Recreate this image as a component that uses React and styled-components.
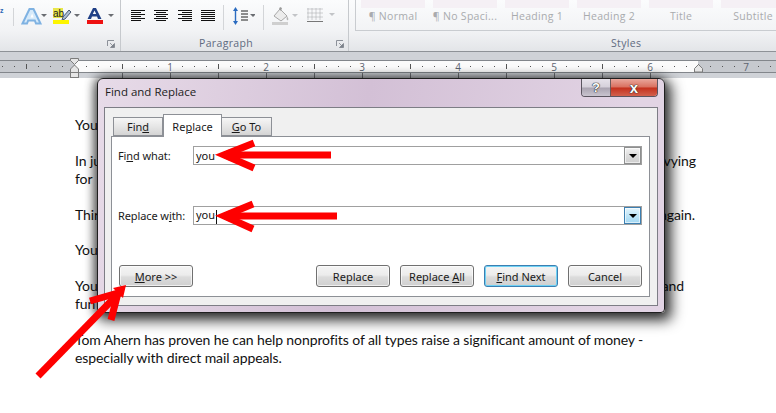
import React from 'react'
import styled, { createGlobalStyle } from 'styled-components'

const GlobalStyle = createGlobalStyle`
  html, body { margin: 0; padding: 0; background: #fff; }
  body { font-family: "Noto Sans", sans-serif; }
`

const Page = styled.div`
  position: relative;
  width: 776px;
  height: 413px;
  overflow: hidden;
  background: #fff;
`

const Ribbon = styled.div`
  display: flex;
  height: 51px;
  background: linear-gradient(#fbfcfd, #f2f3f5 60%, #e3e5e8);
  border-bottom: 1px solid #8e9297;
`

const Group = styled.div`
  width: ${p => p.$w}px;
  flex: none;
  display: flex;
  flex-direction: column;
  box-sizing: border-box;
  border-right: ${p => (p.$last ? 'none' : '1px solid #c6c9cd')};
`

const GroupBody = styled.div`
  height: 35px;
  display: flex;
  align-items: flex-start;
`

const GroupFoot = styled.div`
  display: flex;
  align-items: center;
  justify-content: ${p => p.$align || 'flex-end'};
  height: 15px;
  padding: 0 ${p => p.$pad || 4}px 0 ${p => p.$left || 0}px;
  font: 10.5px "Open Sans", sans-serif;
  letter-spacing: 0.35px;
  color: #5f6a80;
`

const Launcher = styled.svg`
  width: 8px;
  height: 8px;
  flex: none;
  margin-top: 2px;
`

const Gallery = styled.div`
  display: flex;
  gap: 8px;
  margin-left: 6px;
  padding-left: 5px;
  height: 31px;
  width: 440px;
  box-sizing: border-box;
  border-left: 1px solid #c9ccd0;
  border-bottom: 1px solid #c9ccd0;
`

const StyleCard = styled.div`
  flex: none;
  width: 64px;
  display: flex;
  flex-direction: column;
  align-items: center;
`

const StyleSwatch = styled.div`
  width: 100%;
  height: 8px;
  background: #f5f0f5;
`

const StyleName = styled.span`
  margin-top: 1px;
  font: 10.5px "Open Sans", sans-serif;
  letter-spacing: 0.3px;
  white-space: nowrap;
  color: #a9abae;
`

const RulerBand = styled.div`
  height: 26px;
  background: #cfd2d7;
`

const RulerArt = styled.svg`
  display: block;
  width: 776px;
  height: 26px;
`

const Doc = styled.div`
  padding: 38px 0 0 75px;
  font: 14px/17.9px Lato, sans-serif;
  letter-spacing: -0.1px;
  color: #111;
`

const Para = styled.div`
  display: flex;
  flex-direction: column;
  margin-bottom: 17.9px;
`

const Line = styled.div`
  display: flex;
  justify-content: space-between;
  width: ${p => p.$w || 621}px;
  white-space: nowrap;
`

const Dialog = styled.div`
  position: absolute;
  left: 97px;
  top: 78px;
  width: 568px;
  height: 235px;
  box-sizing: border-box;
  display: flex;
  flex-direction: column;
  padding: 0 6px 6px;
  border: 1px solid #1f1f1f;
  border-radius: 6px 6px 4px 4px;
  background: linear-gradient(100deg, #e7dbe8, #d3c0d6 45%, #e2d4e4 90%);
  box-shadow: 4px 5px 13px 3px rgba(0, 0, 0, 0.72), -2px 0 10px 1px rgba(0, 0, 0, 0.45);
`

const TitleBar = styled.div`
  height: 28px;
  flex: none;
  display: flex;
  justify-content: space-between;
  font: 11.5px "Open Sans", sans-serif;
  color: #1c1c1c;
`

const TitleText = styled.span`
  padding: 5px 0 0 1px;
`

const WindowButtons = styled.div`
  display: flex;
  height: 17px;
  border: 1px solid #5b5560;
  border-top: none;
  border-radius: 0 0 4px 4px;
  overflow: hidden;
`

const HelpButton = styled.div`
  width: 28px;
  display: flex;
  align-items: center;
  justify-content: center;
  background: linear-gradient(#e6e2ea, #d5d0da 48%, #a9a3b0 52%, #c9c4cf);
  font: bold 13px "Liberation Sans", sans-serif;
  color: #fff;
  text-shadow: 0 0 1px #222, 0 0 1px #222, 0 0 1px #222;
`

const CloseButton = styled.div`
  width: 46px;
  display: flex;
  align-items: center;
  justify-content: center;
  border-left: 1px solid #6d5a5a;
  background: linear-gradient(#e9a79c, #d9705f 48%, #c4301c 52%, #d2614e);
  font: bold 15px "Liberation Sans", sans-serif;
  color: #fff;
  text-shadow: 0 0 1px #333, 0 0 1px #333, 0 0 1px #333;
`

const Pane = styled.div`
  flex: 1;
  display: flex;
  flex-direction: column;
  padding: 7px 7px 8px 6px;
  background: #f0f0f0;
  border: 1px solid #7d7d85;
`

const Tabs = styled.div`
  display: flex;
  height: 21px;
  padding-left: 2px;
  flex: none;
  position: relative;
  z-index: 1;
`

const Tab = styled.div`
  height: ${p => (p.$active ? 23 : 19)}px;
  margin-top: ${p => (p.$active ? -1 : 2)}px;
  width: ${p => p.$w}px;
  box-sizing: border-box;
  display: flex;
  justify-content: center;
  align-items: center;
  font: 11px "Noto Sans", sans-serif;
  color: #1a1a1a;
  border: 1px solid #8d9096;
  border-bottom: ${p => (p.$active ? 'none' : '1px solid #8d9096')};
  border-left: ${p => (p.$active || p.$first ? '1px solid #8d9096' : 'none')};
  background: ${p => (p.$active ? '#fff' : 'linear-gradient(#f6f6f6, #e6e6e6 50%, #d4d4d4)')};
`

const TabPanel = styled.div`
  flex: 1;
  display: flex;
  flex-direction: column;
  box-sizing: border-box;
  padding: 9px 7px 9px 6px;
  background: #fff;
  border: 1px solid #8d9096;
`

const FieldRow = styled.div`
  display: flex;
  align-items: center;
  height: 19px;
  margin-bottom: ${p => p.$gap || 0}px;
`

const FieldLabel = styled.label`
  width: 75px;
  flex: none;
  font: 11px "Noto Sans", sans-serif;
  letter-spacing: -0.1px;
  color: #1a1a1a;
`

const Combo = styled.div`
  width: 449px;
  height: 19px;
  box-sizing: border-box;
  display: flex;
  align-items: center;
  justify-content: space-between;
  padding-left: 2px;
  border: 1px solid #a0a0a0;
  font: 11px "Noto Sans", sans-serif;
  color: #111;
`

const Caret = styled.span`
  display: inline-block;
  width: 1px;
  height: 14px;
  margin-left: 1px;
  vertical-align: middle;
  background: #111;
`

const ComboDrop = styled.div`
  width: 17px;
  height: 17px;
  box-sizing: border-box;
  display: flex;
  align-items: center;
  justify-content: center;
  border: 1px solid ${p => (p.$focus ? '#3c7fb1' : '#8e8f8f')};
  background: ${p => (p.$focus
    ? 'linear-gradient(#e3f4fc, #bfe5f7 50%, #a3d8f3)'
    : 'linear-gradient(#f2f2f2, #dcdcdc 50%, #cfcfcf)')};
  box-shadow: inset 0 0 0 1px rgba(255, 255, 255, 0.6);
`

const DropArrow = styled.span`
  width: 0;
  height: 0;
  border-left: 4px solid transparent;
  border-right: 4px solid transparent;
  border-top: 4px solid #000;
`

const ButtonRow = styled.div`
  margin-top: auto;
  display: flex;
  padding-left: 1px;
`

const Button = styled.div`
  width: 74px;
  height: 22px;
  box-sizing: border-box;
  flex: none;
  display: flex;
  align-items: center;
  justify-content: center;
  margin-left: ${p => p.$ml || 0}px;
  font: 11px "Noto Sans", sans-serif;
  color: #1a1a1a;
  border: 1px solid ${p => (p.$focus ? '#3c7fb1' : '#707070')};
  border-radius: 3px;
  background: linear-gradient(#f4f4f4, #ececec 45%, #dcdcdc 55%, #cfcfcf);
  box-shadow: inset 0 0 0 1px ${p => (p.$focus ? '#6fd2f5' : 'rgba(255, 255, 255, 0.65)')};
`

const ArrowLayer = styled.svg`
  position: absolute;
  left: 0;
  top: 0;
  width: 776px;
  height: 413px;
  pointer-events: none;
`

const IconSvg = styled.svg`
  flex: none;
  display: block;
  margin: ${p => p.$t || 0}px 0 0 ${p => p.$l || 0}px;
`

const VRule = styled.div`
  flex: none;
  width: 1px;
  height: 25px;
  margin: ${p => p.$t || 5}px 0 0 ${p => p.$l}px;
  background: #d3d5d8;
`

const LauncherIcon = () => (
  <Launcher viewBox="0 0 8 8">
    <path d="M.5 6V.5H7" fill="none" stroke="#8c9199" />
    <path d="M3 3l3.5 3.5M7.5 3.5v4h-4z" fill="#7d838c" stroke="#7d838c" strokeWidth=".8" />
  </Launcher>
)

const DropMark = ({ x, y, c = '#6a6d72' }) => <path d={`M${x} ${y}h6l-3 3z`} fill={c} />

const FontIcons = () => (
  <IconSvg $t={6} width="120" height="22" viewBox="0 6 120 22">
    <text x="0" y="13" fontFamily="Liberation Sans" fontWeight="700" fontSize="7" fill="#2a67b5">z</text>
    <path d="M13.5 8v18" stroke="#d3d5d8" />
    <path d="M23 23.5L30 9h4l7 14.5h-4.5l-1.2-3h-6.6l-1.2 3z" transform="translate(-.5 0)" fill="#d6eafa" stroke="#7fb2e2" strokeWidth="2" />
    <path d="M30.5 17.5l1.6-4 1.6 4z" fill="#fff" />
    <path d="M41 14h6l-3 3z" fill="#6a6d72" />
    <rect x="53" y="8" width="10" height="10" fill="#e9e64a" />
    <text x="53" y="16.5" fontFamily="Liberation Sans" fontSize="10" fill="#222">ab</text>
    <path d="M63 17l6-7 2 2-6 7-3 1z" fill="#aebfd4" stroke="#4a5a72" strokeWidth="1" />
    <rect x="53" y="20" width="16" height="4" fill="#fdf500" />
    <path d="M74 14h6l-3 3z" fill="#6a6d72" />
    <path d="M87.5 19L93 8h3l5.5 11H98l-1-2.6h-5L91 19zM92.8 14h3.4l-1.7-3.6z" fill="#1f3f86" />
    <rect x="87" y="20" width="16" height="4" fill="#ee1111" />
    <path d="M108 14h6l-3 3z" fill="#6a6d72" />
  </IconSvg>
)

const alignLines = {
  left: [[0, 14], [0, 10], [0, 14], [0, 10], [0, 14], [0, 10]],
  center: [[0, 14], [2, 10], [0, 14], [2, 10], [0, 14], [2, 10]],
  right: [[0, 14], [4, 10], [0, 14], [4, 10], [0, 14], [4, 10]],
  justify: [[0, 14], [0, 14], [0, 14], [0, 14], [0, 14], [0, 14]],
}

const AlignIcon = ({ kind }) => (
  <IconSvg $t={10} $l={kind === 'left' ? 10 : 9.3} width="14" height="12" viewBox="0 0 14 12">
    {alignLines[kind].map(([x, w], i) => (
      <rect key={i} x={x} y={i * 2} width={w} height="1" fill="#111" />
    ))}
  </IconSvg>
)

const ParagraphIcons = () => (
  <>
    <AlignIcon kind="left" />
    <AlignIcon kind="center" />
    <AlignIcon kind="right" />
    <AlignIcon kind="justify" />
    <VRule $l={8} />
    <IconSvg $t={7} $l={9} width="22" height="18" viewBox="0 0 22 18">
      <path d="M2.5 0l2.5 4H3.2v10H5l-2.5 4L0 14h1.8V4H0z" fill="#2a6bc0" />
      <path d="M8 4h7M8 7h7M8 10h7M8 13h7" stroke="#222" strokeWidth="1" />
      <DropMark x={17} y={7} />
    </IconSvg>
    <VRule $l={8} />
    <IconSvg $t={7} $l={8} width="26" height="18" viewBox="0 0 26 18">
      <path d="M2 9l6-7 7 7-6 5z" fill="#ececec" stroke="#a8a8a8" />
      <path d="M7 2l1-2 2 1-1 3z" fill="#9a9a9a" />
      <path d="M15 9c1 2 2 3 1 4s-2-1-1-4z" fill="#b5b5b5" />
      <rect x="0" y="15" width="16" height="3" fill="#cfcfcf" />
      <DropMark x={20} y={7} c="#c2c4c7" />
    </IconSvg>
    <IconSvg $t={8} $l={9} width="29" height="16" viewBox="0 0 29 16">
      <path d="M.5 1h15M.5 5h15M.5 9h15M1 .5v11M5 .5v11M9 .5v11M13 .5v11" stroke="#a3a5a8" strokeDasharray="1 1" fill="none" />
      <path d="M0 13.5h16" stroke="#777" />
      <DropMark x={22} y={5} c="#c2c4c7" />
    </IconSvg>
  </>
)

const rulerNumbers = [1, 2, 3, 4, 5, 6, 7]
const rulerTicks = Array.from({ length: 66 }, (_, i) => 2 + i * 12)

const RulerDrawing = () => (
  <RulerArt viewBox="0 52 776 26">
    <rect x="0" y="60" width="776" height="12" fill="#c6c9ce" />
    <rect x="75" y="60" width="623" height="12" fill="#fbfbfb" />
    <path d="M0 60.5h776M0 72.5h776" stroke="#82868b" fill="none" />
    {rulerTicks.map(x => {
      const rel = ((x - 74) % 96 + 96) % 96
      if (rel === 0) return null
      return rel === 48
        ? <path key={x} d={`M${x + .5} 64v5`} stroke="#555" />
        : <rect key={x} x={x} y="66" width="1" height="1" fill="#555" />
    })}
    {rulerNumbers.map(n => (
      <text key={n} x={74 + n * 96} y="70.5" textAnchor="middle" fontFamily="Open Sans" fontSize="10" fill="#5d6470">{n}</text>
    ))}
    {[122, 170, 218, 266, 314, 362, 410, 458, 506, 554, 602, 650].map(x => (
      <path key={x} d={`M${x + .5} 73v5`} stroke="#6f7277" />
    ))}
    <path d="M70.5 58.5h8v2l-4 4-4-4zM74.5 65l4 4v3.5h-8V69z" fill="#e6e6e6" stroke="#7c7c7c" />
    <rect x="70.5" y="72.5" width="8" height="5" fill="#e6e6e6" stroke="#7c7c7c" />
    <path d="M698.5 64.5l4 4v3.5h-8v-3.5z" fill="#e6e6e6" stroke="#7c7c7c" />
  </RulerArt>
)

const Arrows = () => (
  <ArrowLayer viewBox="0 0 776 413">
    <g stroke="#fe0000" strokeWidth="7" fill="none">
      <path d="M331 155H226" />
      <path d="M254 143L224 155L254 168" />
      <path d="M337 216H226" />
      <path d="M253 204L224 216L253 229" />
      <path d="M38 376L120 292" />
      <path d="M90 301L118 293L111 320" />
    </g>
    <path d="M218 155l12-6v12zM218 216l12-6v12zM126 285l-3 13-10-10z" fill="#fe0000" />
  </ArrowLayer>
)

const styleNames = ['¶ Normal', '¶ No Spaci...', 'Heading 1', 'Heading 2', 'Title', 'Subtitle']

export default function App() {
  return (
    <Page>
      <GlobalStyle />
      <Ribbon>
        <Group $w={121}>
          <GroupBody><FontIcons /></GroupBody>
          <GroupFoot $pad={5}><LauncherIcon /></GroupFoot>
        </Group>
        <Group $w={228}>
          <GroupBody><ParagraphIcons /></GroupBody>
          <GroupFoot $pad={4} $align="space-between" $left={78}>Paragraph<LauncherIcon /></GroupFoot>
        </Group>
        <Group $w={427} $last>
          <GroupBody>
            <Gallery>
              {styleNames.map(name => (
                <StyleCard key={name}>
                  <StyleSwatch />
                  <StyleName>{name}</StyleName>
                </StyleCard>
              ))}
            </Gallery>
          </GroupBody>
          <GroupFoot $align="flex-start" $left={262}>Styles</GroupFoot>
        </Group>
      </Ribbon>
      <RulerBand><RulerDrawing /></RulerBand>
      <Doc>
        <Para><Line>You</Line></Para>
        <Para>
          <Line><span>In ju</span><span>vying</span></Line>
          <Line>for</Line>
        </Para>
        <Para><Line $w={620}><span>Thir</span><span>again.</span></Line></Para>
        <Para><Line>You</Line></Para>
        <Para>
          <Line $w={609}><span>You</span><span>and</span></Line>
          <Line>fun</Line>
        </Para>
        <Para>
          <Line>Tom Ahern has proven he can help nonprofits of all types raise a significant amount of money -</Line>
          <Line>especially with direct mail appeals.</Line>
        </Para>
      </Doc>
      <Dialog>
        <TitleBar>
          <TitleText>Find and Replace</TitleText>
          <WindowButtons>
            <HelpButton>?</HelpButton>
            <CloseButton>x</CloseButton>
          </WindowButtons>
        </TitleBar>
        <Pane>
          <Tabs>
            <Tab $w={50} $first><span>Fin<u>d</u></span></Tab>
            <Tab $w={59} $active><span>Re<u>p</u>lace</span></Tab>
            <Tab $w={50}><span><u>G</u>o To</span></Tab>
          </Tabs>
          <TabPanel>
            <FieldRow $gap={41}>
              <FieldLabel>Fi<u>n</u>d what:</FieldLabel>
              <Combo><span>you</span><ComboDrop><DropArrow /></ComboDrop></Combo>
            </FieldRow>
            <FieldRow>
              <FieldLabel>Replace w<u>i</u>th:</FieldLabel>
              <Combo><span>you<Caret /></span><ComboDrop $focus><DropArrow /></ComboDrop></Combo>
            </FieldRow>
            <ButtonRow>
              <Button><span><u>M</u>ore &gt;&gt;</span></Button>
              <Button $ml={123}>Replace</Button>
              <Button $ml={10}><span>Replace <u>A</u>ll</span></Button>
              <Button $ml={10} $focus><span><u>F</u>ind Next</span></Button>
              <Button $ml={10}>Cancel</Button>
            </ButtonRow>
          </TabPanel>
        </Pane>
      </Dialog>
      <Arrows />
    </Page>
  )
}
